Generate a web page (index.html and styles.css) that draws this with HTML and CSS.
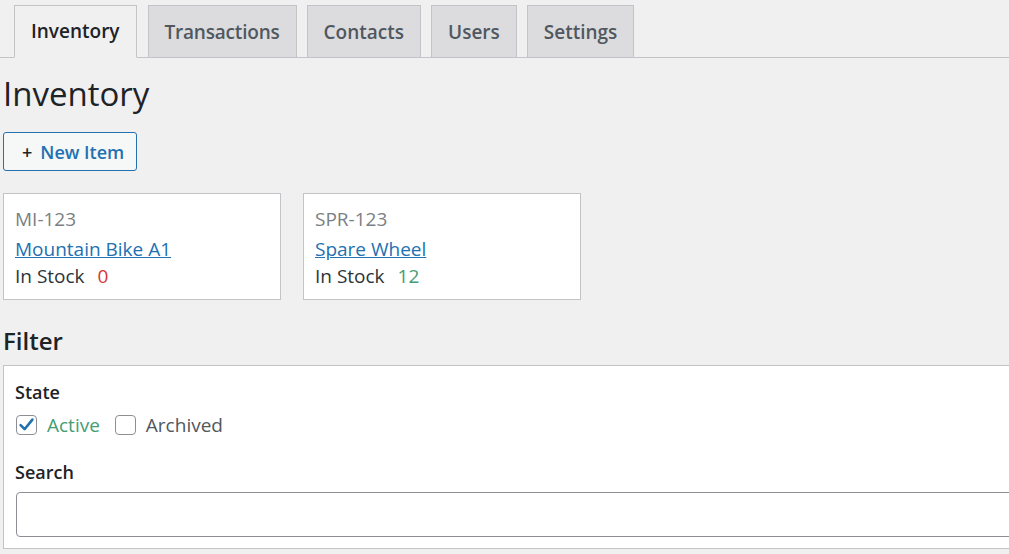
FILE: index.html
```html
<!DOCTYPE html>
<html lang="en">
<head>
<meta charset="utf-8">
<title>Inventory</title>
<link rel="stylesheet" href="styles.css">
</head>
<body>
<div class="page">
  <nav class="tabs">
    <a class="tab tab-active" href="#">Inventory</a>
    <a class="tab tab-tight" href="#">Transactions</a>
    <a class="tab" href="#">Contacts</a>
    <a class="tab" href="#">Users</a>
    <a class="tab" href="#">Settings</a>
  </nav>
  <main class="content">
    <h1 class="title">Inventory</h1>
    <button class="btn-new" type="button"><span class="plus">+</span>New Item</button>
    <div class="cards">
      <div class="card">
        <div class="card-sku">MI-123</div>
        <a class="card-name" href="#">Mountain Bike A1</a>
        <div class="card-stock">In Stock <span class="qty qty-out">0</span></div>
      </div>
      <div class="card">
        <div class="card-sku">SPR-123</div>
        <a class="card-name" href="#">Spare Wheel</a>
        <div class="card-stock">In Stock <span class="qty qty-in">12</span></div>
      </div>
    </div>
    <h2 class="filter-title">Filter</h2>
    <section class="filter-box">
      <div class="field-label">State</div>
      <div class="checks">
        <label class="check check-on">
          <span class="box"><svg viewBox="0 0 21 20" width="21" height="20"><path d="M4.6 10.2 L8.6 14.2 L16.4 4.6" fill="none" stroke="#2271b1" stroke-width="2.6" stroke-linecap="round" stroke-linejoin="round"/></svg></span>
          <span class="check-text">Active</span>
        </label>
        <label class="check">
          <span class="box"></span>
          <span class="check-text">Archived</span>
        </label>
      </div>
      <div class="field-label search-label">Search</div>
      <div class="search-input"></div>
    </section>
  </main>
</div>
</body>
</html>
```

FILE: styles.css
```css
html, body {
  margin: 0;
  padding: 0;
}
body {
  background: #f0f0f1;
  font-family: "Open Sans", "Noto Sans", sans-serif;
  color: #2c3338;
  overflow: hidden;
}
.page {
  width: 1200px;
}
.tabs {
  display: flex;
  align-items: flex-end;
  gap: 10px;
  padding: 5px 0 0 14px;
  border-bottom: 1px solid #c3c4c7;
  height: 58px;
  box-sizing: border-box;
}
.tab {
  display: flex;
  align-items: center;
  height: 52px;
  box-sizing: border-box;
  padding: 0 16px;
  border: 1px solid #c3c4c7;
  border-bottom: none;
  background: #dcdcde;
  color: #50575e;
  font-size: 19px;
  font-weight: 600;
  text-decoration: none;
}
.tab-tight {
  letter-spacing: -0.2px;
}
.tab-active {
  background: #f0f0f1;
  color: #1d2327;
  height: 53px;
  margin-right: 1px;
  margin-bottom: -1px;
  border-bottom: 1px solid #f0f0f1;
  padding-bottom: 1px;
}
.content {
  padding-left: 3px;
}
.title {
  margin: 16px 0 0;
  font-size: 33px;
  font-weight: 400;
  line-height: 40px;
  color: #1d2327;
}
.btn-new {
  display: flex;
  align-items: center;
  margin-top: 18px;
  height: 39px;
  box-sizing: border-box;
  padding: 0 12px 0 18px;
  border: 1px solid #2271b1;
  border-radius: 3px;
  background: #f6f7f7;
  color: #2271b1;
  font-family: inherit;
  font-size: 18px;
  font-weight: 600;
}
.plus {
  color: #1d2327;
  margin-right: 8px;
}
.cards {
  display: flex;
  gap: 22px;
  margin-top: 22px;
}
.card {
  width: 278px;
  height: 107px;
  box-sizing: border-box;
  padding: 12px 11px 0;
  border: 1px solid #c3c4c7;
  background: #fff;
  font-size: 19px;
  line-height: 27px;
}
.card-sku {
  color: #7b7f84;
}
.card-name {
  display: inline-block;
  margin-top: 3px;
  color: #2271b1;
  text-decoration: underline;
}
.card-stock {
  color: #2c3338;
}
.qty {
  margin-left: 8px;
}
.qty-out {
  color: #d63638;
}
.qty-in {
  color: #449d74;
}
.filter-title {
  margin: 26px 0 0;
  font-size: 24px;
  font-weight: 600;
  line-height: 30px;
  color: #1d2327;
}
.filter-box {
  margin-top: 9px;
  padding: 14px 12px 11px 11px;
  border: 1px solid #c3c4c7;
  border-right: none;
  background: #fff;
}
.field-label {
  font-size: 18px;
  font-weight: 600;
  line-height: 24px;
  color: #1d2327;
}
.checks {
  display: flex;
  align-items: center;
  gap: 14px;
  margin-top: 9px;
  height: 24px;
}
.check {
  display: flex;
  align-items: center;
  gap: 10px;
  font-size: 19px;
  color: #50575e;
}
.check-on {
  color: #449d74;
}
.box {
  width: 21px;
  height: 20px;
  box-sizing: border-box;
  border: 1px solid #8c8f94;
  border-radius: 4px;
  background: #fff;
  margin-left: 1px;
  position: relative;
}
.box svg {
  position: absolute;
  left: -1px;
  top: -1px;
  display: block;
  width: 21px;
  height: 20px;
}
.search-label {
  margin-top: 23px;
}
.search-input {
  margin-top: 8px;
  margin-left: 1px;
  height: 45px;
  box-sizing: border-box;
  border: 1px solid #8c8f94;
  border-radius: 4px;
  background: #fff;
}
```
